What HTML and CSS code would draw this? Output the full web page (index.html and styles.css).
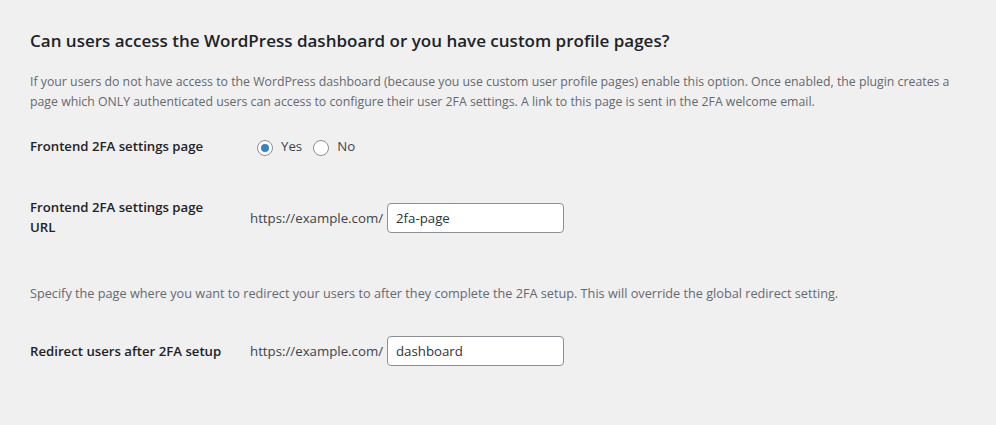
FILE: index.html
```html
<!DOCTYPE html>
<html lang="en">
<head>
<meta charset="utf-8">
<title>2FA settings</title>
<link rel="stylesheet" href="styles.css">
</head>
<body>
<div class="wrap">
  <h2 class="title">Can users access the WordPress dashboard or you have custom profile pages?</h2>
  <p class="desc desc-main">If your users do not have access to the WordPress dashboard (because you use custom user profile pages) enable this option. Once enabled, the plugin creates a page which ONLY authenticated users can access to configure their user 2FA settings. A link to this page is sent in the 2FA welcome email.</p>

  <div class="row row-radio">
    <div class="label">Frontend 2FA settings page</div>
    <div class="field radios">
      <label class="opt"><input type="radio" name="frontend" checked><span>Yes</span></label>
      <label class="opt"><input type="radio" name="frontend"><span>No</span></label>
    </div>
  </div>

  <div class="row row-url">
    <div class="label">Frontend 2FA settings page URL</div>
    <div class="field">
      <span class="prefix">https://example.com/</span>
      <input class="text" type="text" value="2fa-page">
    </div>
  </div>

  <p class="desc desc-second">Specify the page where you want to redirect your users to after they complete the 2FA setup. This will override the global redirect setting.</p>

  <div class="row row-redirect">
    <div class="label">Redirect users after 2FA setup</div>
    <div class="field">
      <span class="prefix">https://example.com/</span>
      <input class="text" type="text" value="dashboard">
    </div>
  </div>
</div>
</body>
</html>
```
FILE: styles.css
```css
html, body {
  margin: 0;
  padding: 0;
  background: #f0f0f1;
}
body {
  font-family: "Open Sans", "Noto Sans", sans-serif;
  color: #3c434a;
}
.wrap {
  padding: 29px 30px 0 30px;
}
.title {
  margin: 0;
  font-size: 17px;
  line-height: 24px;
  font-weight: 600;
  color: #1d2327;
}
.desc {
  margin: 0;
  color: #646970;
  line-height: 20px;
}
.desc-main {
  margin-top: 19px;
  font-size: 12.3px;
}
.desc-second {
  margin-top: 46px;
  font-size: 12.7px;
}
.row {
  display: flex;
  align-items: center;
}
.label {
  width: 200px;
  margin-right: 20px;
  flex: none;
  font-size: 13.2px;
  font-weight: 600;
  line-height: 20px;
  color: #1d2327;
}
.row-radio {
  margin-top: 24px;
  height: 20px;
}
.row-url {
  margin-top: 42px;
}
.row-url .label {
  line-height: 19.5px;
}
.row-redirect {
  margin-top: 33px;
}
.field {
  display: flex;
  align-items: center;
  font-size: 13.25px;
  color: #3c434a;
}
.radios {
  padding-left: 7px;
  gap: 11px;
}
.opt {
  display: flex;
  align-items: center;
  gap: 8px;
  line-height: 20px;
}
.opt input {
  appearance: none;
  -webkit-appearance: none;
  margin: 3px 0 0 0;
  width: 16px;
  height: 16px;
  box-sizing: border-box;
  border: 1px solid #8c8f94;
  border-radius: 50%;
  background: #fff;
  display: grid;
  place-items: center;
}
.opt input:checked::before {
  content: "";
  width: 8px;
  height: 8px;
  border-radius: 50%;
  background: #3582c4;
}
.prefix {
  margin-right: 4px;
}
.text {
  box-sizing: border-box;
  width: 177px;
  height: 30px;
  margin: 0;
  padding: 0 8px;
  border: 1px solid #8c8f94;
  border-radius: 4px;
  background: #fff;
  font-family: "Open Sans", "Noto Sans", sans-serif;
  font-size: 13.25px;
  color: #2c3338;
}
```
